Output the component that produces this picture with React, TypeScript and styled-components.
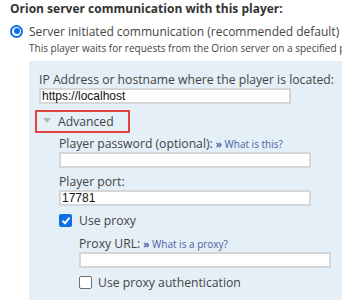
import * as React from 'react';
import styled, { createGlobalStyle } from 'styled-components';

const GlobalStyle = createGlobalStyle`
  html, body {
    margin: 0;
    padding: 0;
    background: #ffffff;
  }
  body {
    font-family: 'Open Sans', 'DejaVu Sans', sans-serif;
    color: #444444;
    overflow: hidden;
  }
`;

const Page = styled.div`
  width: 342px;
  height: 305px;
  padding: 1px 0 0 10px;
  box-sizing: border-box;
  overflow: hidden;
`;

const Heading = styled.div`
  font-size: 12px;
  font-weight: 700;
  color: #333333;
  line-height: 16px;
  white-space: nowrap;
`;

const RadioRow = styled.label`
  display: flex;
  align-items: center;
  gap: 6px;
  margin-top: 6px;
  font-size: 12px;
  line-height: 17px;
  white-space: nowrap;
`;

const RadioDot = styled.span`
  width: 13px;
  height: 13px;
  box-sizing: border-box;
  border-radius: 50%;
  border: 2px solid #0b6fe8;
  display: flex;
  align-items: center;
  justify-content: center;
  flex-shrink: 0;
  margin-top: -1px;
  &::after {
    content: '';
    width: 6px;
    height: 6px;
    border-radius: 50%;
    background: #0b6fe8;
  }
`;

const Note = styled.div`
  font-size: 10px;
  line-height: 14px;
  margin: 1px 0 0 19px;
  white-space: nowrap;
`;

const Panel = styled.div`
  margin: 6px 0 0 19px;
  background: #e4eff8;
  padding: 11px 0 0 10px;
  height: 239px;
  box-sizing: border-box;
`;

const Indent = styled.div<{ $level: number }>`
  margin-left: ${(p) => p.$level * 20}px;
`;

const Label = styled.div`
  font-size: 12.2px;
  line-height: 16px;
  white-space: nowrap;
`;

const Help = styled.a`
  font-size: 10px;
  color: #4a60a3;
  text-decoration: none;
  margin-left: 3px;
  &::before {
    content: '» ';
    font-weight: 700;
  }
`;

const Field = styled.div<{ $width: number }>`
  width: ${(p) => p.$width}px;
  height: 16px;
  box-sizing: border-box;
  border: 2px solid #d6d6d6;
  background: #ffffff;
  font-family: 'Liberation Sans', Arial, sans-serif;
  font-size: 12px;
  line-height: 12px;
  color: #111111;
  padding-left: 1px;
  margin-bottom: 6px;
`;

const Toggle = styled.div`
  display: flex;
  align-items: center;
  gap: 7px;
  width: 95px;
  height: 23px;
  box-sizing: border-box;
  border: 2px solid #e0443c;
  margin: 0 0 3px -4px;
  padding-left: 6px;
  font-size: 12.2px;
`;

const Arrow = styled.span`
  width: 0;
  height: 0;
  border-left: 4px solid transparent;
  border-right: 4px solid transparent;
  border-top: 5px solid #b8b8b8;
  margin-top: -2px;
`;

const CheckRow = styled.div<{ $gap: number }>`
  display: flex;
  align-items: center;
  gap: ${(p) => p.$gap}px;
  font-size: 12.2px;
  line-height: 18px;
  white-space: nowrap;
`;

const Box = styled.span<{ $checked?: boolean }>`
  width: 13px;
  height: 13px;
  box-sizing: border-box;
  border-radius: 2px;
  border: ${(p) => (p.$checked ? 'none' : '1.5px solid #6f6f6f')};
  background: ${(p) => (p.$checked ? '#0b6fe8' : '#ffffff')};
  display: flex;
  align-items: center;
  justify-content: center;
  flex-shrink: 0;
  margin-top: -2px;
`;

const Spacer = styled.div<{ $h: number }>`
  height: ${(p) => p.$h}px;
`;

export default function App() {
  return (
    <Page>
      <GlobalStyle />
      <Heading>Orion server communication with this player:</Heading>
      <RadioRow>
        <RadioDot />
        Server initiated communication (recommended default)
      </RadioRow>
      <Note>This player waits for requests from the Orion server on a specified port.</Note>
      <Panel>
        <Label>IP Address or hostname where the player is located:</Label>
        <Field $width={252}>https://localhost</Field>
        <Toggle>
          <Arrow />
          Advanced
        </Toggle>
        <Indent $level={1}>
          <Label>
            Player password (optional):<Help>What is this?</Help>
          </Label>
          <Field $width={252} />
          <Label>Player port:</Label>
          <Field $width={252}>17781</Field>
          <CheckRow $gap={7}>
            <Box $checked>
              <svg width="10" height="9" viewBox="0 0 10 9">
                <path d="M1.5 4.8 L4 7.2 L8.6 1.6" fill="none" stroke="#fff" strokeWidth="2" />
              </svg>
            </Box>
            Use proxy
          </CheckRow>
          <Spacer $h={6} />
          <Indent $level={1}>
            <Label>
              Proxy URL:<Help>What is a proxy?</Help>
            </Label>
            <Field $width={252} />
            <CheckRow $gap={6}>
              <Box />
              Use proxy authentication
            </CheckRow>
          </Indent>
        </Indent>
      </Panel>
    </Page>
  );
}
